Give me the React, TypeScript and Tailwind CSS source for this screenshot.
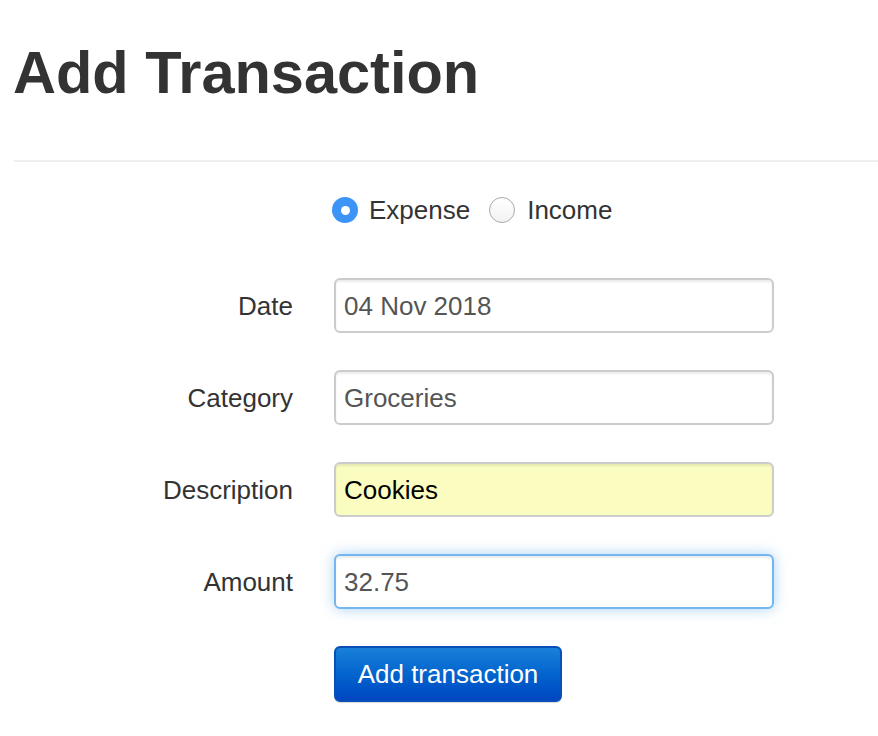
import React from "react";

const font = { fontFamily: '"Liberation Sans", Arial, sans-serif' };

function Field({ label, value, variant }: { label: string; value: string; variant?: "auto" | "focus" }) {
  const base =
    "h-[55px] w-[440px] rounded-[6px] border-2 px-[8px] flex items-center text-[26px] leading-none";
  let cls = base + " bg-white border-[#cccccc] text-[#555555] shadow-[inset_0_2px_2px_rgba(0,0,0,0.08)]";
  if (variant === "auto") cls = base + " bg-[#fafdbf] border-[#cccccc] text-black shadow-[inset_0_2px_2px_rgba(0,0,0,0.08)]";
  if (variant === "focus")
    cls = base + " bg-white border-[#74b6ef] text-[#555555] shadow-[inset_0_2px_2px_rgba(0,0,0,0.08),0_0_14px_rgba(102,175,233,0.55)]";
  return (
    <>
      <div className="text-right text-[26px] text-[#333333] self-center leading-none">{label}</div>
      <div className={cls}>{value}</div>
    </>
  );
}

export default function App() {
  return (
    <div className="min-h-[736px] bg-white pl-[14px]" style={font}>
      <h1 className="mt-0 pt-[40px] text-[59.5px] leading-[65px] font-bold text-[#333333] -ml-[1px]">
        Add Transaction
      </h1>
      <div className="mt-[55px] border-t-2 border-[#eeeeee]" />
      <div className="mt-[35px] ml-[318px] flex items-center h-[26px] text-[26px] text-[#333333] leading-none">
        <span className="w-[26px] h-[26px] rounded-full bg-[#3b94f6] flex items-center justify-center">
          <span className="w-[9px] h-[9px] rounded-full bg-white" />
        </span>
        <span className="ml-[11px]">Expense</span>
        <span className="ml-[19px] w-[26px] h-[26px] rounded-full border-[1.5px] border-[#aaaaaa] bg-gradient-to-b from-white to-[#f3f3f3]" />
        <span className="ml-[12px]">Income</span>
      </div>
      <div className="mt-[55px] grid grid-cols-[279px_440px] gap-x-[41px] gap-y-[37px]">
        <Field label="Date" value="04 Nov 2018" />
        <Field label="Category" value="Groceries" />
        <Field label="Description" value="Cookies" variant="auto" />
        <Field label="Amount" value="32.75" variant="focus" />
        <div />
        <button className="h-[56px] w-[228px] rounded-[6px] border-2 border-[#0a4fb8] bg-gradient-to-b from-[#1880d8] to-[#0046c2] text-white text-[26px] leading-none flex items-center justify-center shadow-[0_1px_1px_rgba(0,0,0,0.15)]">
          Add transaction
        </button>
      </div>
    </div>
  );
}
